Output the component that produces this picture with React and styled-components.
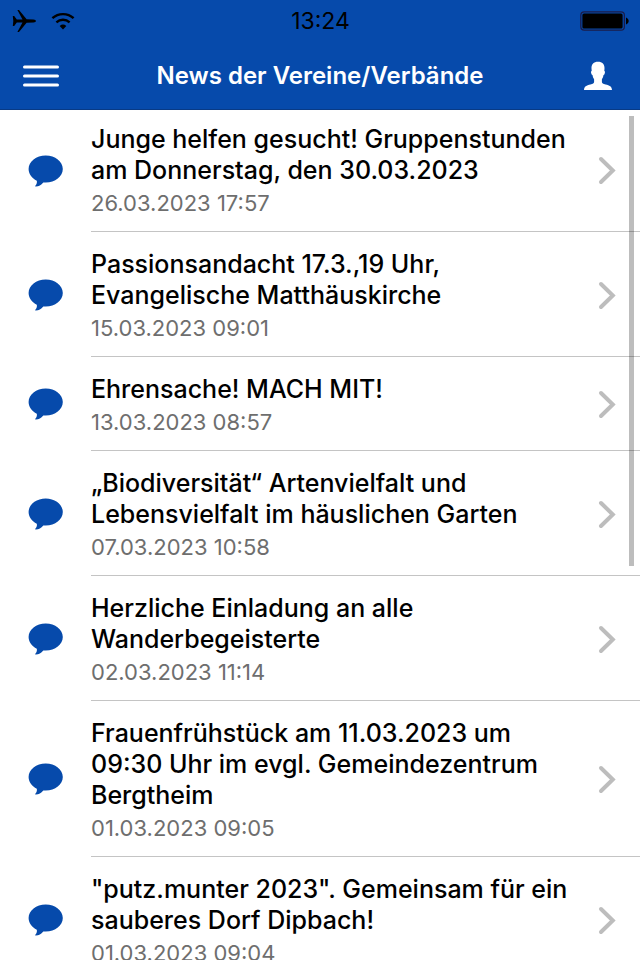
import styled, { createGlobalStyle } from "styled-components";

const news = [
  {
    title: "Junge helfen gesucht! Gruppenstunden am Donnerstag, den 30.03.2023",
    date: "26.03.2023 17:57",
  },
  {
    title: "Passionsandacht 17.3.,19 Uhr, Evangelische Matthäuskirche",
    date: "15.03.2023 09:01",
  },
  { title: "Ehrensache! MACH MIT!", date: "13.03.2023 08:57" },
  {
    title: "„Biodiversität“ Artenvielfalt und Lebensvielfalt im häuslichen Garten",
    date: "07.03.2023 10:58",
  },
  {
    title: "Herzliche Einladung an alle Wanderbegeisterte",
    date: "02.03.2023 11:14",
  },
  {
    title:
      "Frauenfrühstück am 11.03.2023 um 09:30 Uhr im evgl. Gemeindezentrum Bergtheim",
    date: "01.03.2023 09:05",
  },
  {
    title: '"putz.munter 2023". Gemeinsam für ein sauberes Dorf Dipbach!',
    date: "01.03.2023 09:04",
  },
];

const App = () => {
  return (
    <>
      <GlobalStyle />
      <Screen>
        <Header>
          {/* STATUS BAR */}
          <StatusBar>
            <StatusIcons>
              <PlaneIcon />
              <WifiIcon />
            </StatusIcons>
            <Clock>13:24</Clock>
            <BatteryIcon />
          </StatusBar>
          {/* NAVIGATION */}
          <NavBar>
            <NavButton type="button" aria-label="Menü">
              <MenuIcon />
            </NavButton>
            <Heading>News der Vereine/Verbände</Heading>
            <NavButton type="button" aria-label="Profil" $end>
              <PersonIcon />
            </NavButton>
          </NavBar>
        </Header>
        <Content>
          <List>
            {news.map((item) => (
              <Item key={item.title}>
                <ItemLink href="#">
                  <BubbleIcon />
                  <ItemBody>
                    <ItemText>
                      <Title>{item.title}</Title>
                      <PostedAt>{item.date}</PostedAt>
                    </ItemText>
                    <ChevronIcon />
                  </ItemBody>
                </ItemLink>
              </Item>
            ))}
          </List>
          <ScrollThumb />
        </Content>
      </Screen>
    </>
  );
};

const PlaneIcon = () => (
  <svg width="24" height="24" viewBox="0 0 24 24" fill="#000" aria-hidden="true">
    <path d="M.8 7h1.4l2.6 3.400h5.700L5.400 1H7l7.600 9.300 6.900.2c1.600.1 2.400.7 2.400 1.500s-.8 1.400-2.400 1.500l-6.900.2L7 23H5.400l5.100-9.400H4.800L2.200 17H.8l.5-5z" />
  </svg>
);

const WifiIcon = () => (
  <svg width="24" height="18" viewBox="0 0 24 18" fill="none" stroke="#000" aria-hidden="true">
    <path d="M1.400 6.200c6-5.500 15.200-5.500 21.200 0" strokeWidth="2.400" />
    <path d="M5.400 10.300c3.800-3.400 9.400-3.400 13.200 0" strokeWidth="2.400" />
    <path d="M8.700 13.900a5 5 0 0 1 6.600 0L12 17.400z" fill="#000" stroke="none" />
  </svg>
);

const BatteryIcon = () => (
  <Battery width="49" height="20" viewBox="0 0 49 20" aria-hidden="true">
    <rect x="0.8" y="0.8" width="43.6" height="18.4" rx="3.4" fill="none" stroke="#1b1c4a" strokeWidth="1.2" />
    <rect x="2.4" y="2.4" width="40.2" height="15.2" rx="1.6" fill="#000" />
    <path d="M46 6.500c3.600 1.400 3.600 5.600 0 7z" fill="#000" />
  </Battery>
);

const MenuIcon = () => (
  <svg width="36" height="22" viewBox="0 0 36 22" aria-hidden="true">
    <path d="M1.500 2h33M1.500 11h33M1.500 20h33" stroke="#fff" strokeWidth="3" strokeLinecap="round" />
  </svg>
);

const PersonIcon = () => (
  <svg width="28" height="30" viewBox="0 0 28 30" fill="#fff" aria-hidden="true">
    <path d="M14 .8c4.300 0 6.700 2.700 6.500 6.800l-.2 2.300c.8.200.8 1.200.4 2.600-.3 1-.7 1.500-1.200 1.600-.3 1.900-.8 3.100-1.600 4.100v2.900c0 1.300 1.200 1.800 3.700 2.500 3.900 1 6.200 1.700 6.400 5.400H0c.2-3.700 2.500-4.400 6.400-5.400 2.500-.7 3.700-1.200 3.700-2.500v-2.900c-.8-1-1.300-2.200-1.600-4.100-.5-.1-.9-.6-1.200-1.600-.4-1.400-.4-2.400.4-2.600l-.2-2.300C7.300 3.500 9.700.8 14 .8z" />
  </svg>
);

const BubbleIcon = () => (
  <Bubble width="36" height="34" viewBox="0 0 36 34" aria-hidden="true">
    <path
      d="M17.700 1.500C27.200 1.500 34.800 7.500 34.800 15S27.200 28.500 17.700 28.500c-.8 0-1.600 0-2.400-.1-2.200 2.500-4.400 3.900-7.500 4.200-.7 0-.8-.7-.3-1.200 1.200-1.300 1.700-2.800 1.300-4.700C3.900 24.300.6 20 .6 15 .6 7.500 8.200 1.500 17.700 1.500z"
      fill="#064aab"
    />
  </Bubble>
);

const ChevronIcon = () => (
  <Chevron width="18" height="30" viewBox="0 0 18 30" aria-hidden="true">
    <path d="M3 3l11.800 11.500L3 26" fill="none" stroke="#bdbdbd" strokeWidth="4" strokeLinecap="round" />
  </Chevron>
);

const GlobalStyle = createGlobalStyle`
  * {
    box-sizing: border-box;
  }
  body {
    margin: 0;
    background-color: #fff;
    font-family: Inter, "Liberation Sans", sans-serif;
  }
`;

const Screen = styled.div`
  display: flex;
  flex-direction: column;
  height: 100vh;
  overflow: hidden;
`;

const Header = styled.header`
  flex-shrink: 0;
  background-color: #064aab;
  border-bottom: 1px solid #083a85;
`;

const StatusBar = styled.div`
  display: grid;
  grid-template-columns: 1fr auto 1fr;
  align-items: center;
  height: 41px;
  padding: 0 11px 0 12px;
`;

const StatusIcons = styled.div`
  display: flex;
  align-items: center;
  gap: 15px;
`;

const Clock = styled.time`
  font-size: 23px;
  line-height: 28px;
  color: #000;
`;

const Battery = styled.svg`
  justify-self: end;
`;

const NavBar = styled.nav`
  display: flex;
  align-items: center;
  justify-content: space-between;
  height: 68px;
  padding-top: 2px;
`;

const NavButton = styled.button`
  display: flex;
  align-items: center;
  justify-content: ${(props) => (props.$end ? "flex-end" : "flex-start")};
  width: 80px;
  height: 64px;
  padding: ${(props) => (props.$end ? "0 28px 0 0" : "0 0 0 23px")};
  background: none;
  border: none;
  cursor: pointer;
`;

const Heading = styled.h1`
  margin: 0;
  font-size: 24px;
  font-weight: 600;
  line-height: 32px;
  text-align: center;
  color: #fff;
`;

const Content = styled.main`
  position: relative;
  flex: 1;
  min-height: 0;
  overflow: hidden;
`;

const List = styled.ul`
  margin: 0;
  padding: 0;
  list-style: none;
`;

const ItemBody = styled.div`
  display: flex;
  align-items: center;
  flex: 1;
  min-width: 0;
  padding: 17px 24px 14px 0;
  border-bottom: 1px solid #c4c4c4;
`;

const Item = styled.li`
  &:first-child ${ItemBody} {
    padding-top: 14px;
  }
`;

const ItemLink = styled.a`
  display: flex;
  align-items: center;
  color: #000;
  text-decoration: none;
`;

const Bubble = styled.svg`
  flex-shrink: 0;
  margin: 0 27px 0 28px;
`;

const ItemText = styled.div`
  flex: 1;
  min-width: 0;
`;

const Title = styled.h2`
  margin: 0 0 3px;
  font-size: 25px;
  font-weight: 500;
  line-height: 31px;
`;

const PostedAt = styled.time`
  display: block;
  font-size: 22px;
  line-height: 28px;
  color: #6e6e6e;
`;

const Chevron = styled.svg`
  flex-shrink: 0;
  margin-left: 16px;
`;

const ScrollThumb = styled.div`
  position: absolute;
  top: 6px;
  right: 6px;
  width: 5px;
  height: 450px;
  background-color: rgba(0, 0, 0, 0.26);
`;

export default App;
